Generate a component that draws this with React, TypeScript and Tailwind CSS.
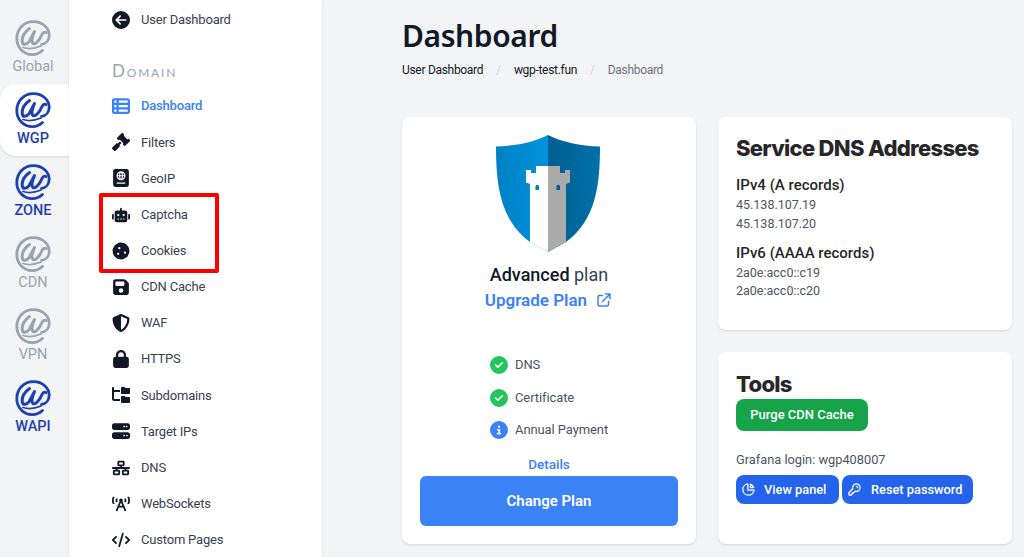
import React from "react";
import {
  FaCircleArrowLeft, FaTableList, FaGavel, FaPassport, FaRobot, FaCookie, FaFloppyDisk,
  FaShieldHalved, FaLock, FaFolderTree, FaServer, FaNetworkWired, FaCode, FaCircleCheck, FaCircleInfo,
} from "react-icons/fa6";
import { FaBroadcastTower } from "react-icons/fa";
import { HiOutlineChartPie, HiOutlineKey, HiOutlineExternalLink } from "react-icons/hi";

function Logo({ color }: { color: string }) {
  return (
    <svg width="36" height="36" viewBox="0 0 36 36" fill="none" stroke={color} strokeLinecap="round" strokeLinejoin="round">
      <path d="M27.500 30.500C24.500 33.400 21 34.600 17.500 34.600C8.500 34.600 1.800 27.500 1.800 18.400C1.800 9 9 1.600 18.400 1.600C27.500 1.600 34.200 8 34.200 15.200C34.200 20.200 31 23.800 26.500 24.400" strokeWidth="2.800" />
      <path d="M14.500 8.500C9.500 12 6.800 17 7.200 21.500C7.600 25.500 11.800 25 14.200 21.500L19.500 11.500C17.500 16.500 16 21.500 17.800 23.300C20 25.300 24.500 20.500 26.500 15.500C27.500 13 29 11.500 31 12.500" strokeWidth="3" />
      <path d="M8 27.500C14 29.500 20 28.500 26 26" strokeWidth="1.800" />
    </svg>
  );
}

function RailItem({ label, active, blue }: { label: string; active?: boolean; blue?: boolean }) {
  return (
    <div className={`h-[72px] pr-[3px] flex flex-col items-center justify-center ${active ? "bg-white rounded-l-2xl shadow-sm" : ""}`}>
      <Logo color={blue ? "#1e40af" : "#9ca3af"} />
      <div className={`text-[14.500px] leading-[18px] mt-[2px] ${blue ? "text-[#1e40af] font-medium" : "text-[#9ca3af]"}`}>{label}</div>
    </div>
  );
}

function NavItem({ icon, label, active }: { icon: React.ReactNode; label: string; active?: boolean }) {
  return (
    <div className={`h-[36.150px] flex items-center text-[13px] tracking-[-0.2px] ${active ? "text-[#3b82f6] font-medium" : "text-[#374151]"}`}>
      <span className={`w-[29px] flex items-center text-[18px] ${active ? "text-[#3b82f6]" : "text-[#111827]"}`}>{icon}</span>
      <span>{label}</span>
    </div>
  );
}

function Shield() {
  return (
    <svg width="104" height="118" viewBox="0 0 104 118" className="-ml-[2px]">
      <defs>
        <linearGradient id="sl" x1="0" y1="0" x2="1" y2="0">
          <stop offset="0" stopColor="#0080c4" />
          <stop offset="1" stopColor="#0093dd" />
        </linearGradient>
        <linearGradient id="sr" x1="0" y1="0" x2="1" y2="0">
          <stop offset="0" stopColor="#005f92" />
          <stop offset="1" stopColor="#0071a8" />
        </linearGradient>
      </defs>
      <path d="M52 0C38 7 20 11 0 11.500C0 50 4 85 34 107L52 117Z" fill="url(#sl)" />
      <path d="M52 0C66 7 84 11 104 11.500C104 50 100 85 70 107L52 117Z" fill="url(#sr)" />
      <path d="M52 31H40V38H35V35H30V47.500L34 49V107L52 117Z" fill="#fff" />
      <path d="M52 31H64V38H69V35H74V47.500L70 49V107L52 117Z" fill="#aaaaaa" />
      <path d="M39.500 55V51.500A1.700 1.700 0 0 1 43 51.500V55Z" fill="#0080c4" />
      <path d="M60.500 55V51.500A1.700 1.700 0 0 1 64 51.500V55Z" fill="#005f92" />
    </svg>
  );
}

function Feature({ icon, label }: { icon: React.ReactNode; label: string }) {
  return (
    <div className="flex items-center gap-[7px] h-[18px] text-[13px] tracking-[-0.1px] text-[#4b5563]">
      <span className="text-[18px]">{icon}</span>
      <span>{label}</span>
    </div>
  );
}

export default function App() {
  return (
    <div className="h-[557px] w-[1024px] overflow-hidden flex relative bg-[#f3f4f6] font-['Roboto',sans-serif]">
      <aside className="w-[69px] shrink-0 pt-3 bg-[#f3f4f6]">
        <RailItem label="Global" />
        <RailItem label="WGP" active blue />
        <RailItem label="ZONE" blue />
        <RailItem label="CDN" />
        <RailItem label="VPN" />
        <RailItem label="WAPI" blue />
      </aside>

      <nav className="w-[253px] shrink-0 bg-white shadow-sm pl-[43px] pt-[2px]">
        <NavItem icon={<FaCircleArrowLeft />} label="User Dashboard" />
        <div className="mt-[23px] mb-[8px] h-[19px] leading-[19px] text-[17px] text-[#9ca3af] tracking-[1.800px] [font-variant:small-caps] font-['Lato',sans-serif]">Domain</div>
        <NavItem icon={<FaTableList />} label="Dashboard" active />
        <NavItem icon={<FaGavel />} label="Filters" />
        <NavItem icon={<FaPassport />} label="GeoIP" />
        <NavItem icon={<FaRobot />} label="Captcha" />
        <NavItem icon={<FaCookie />} label="Cookies" />
        <NavItem icon={<FaFloppyDisk />} label="CDN Cache" />
        <NavItem icon={<FaShieldHalved />} label="WAF" />
        <NavItem icon={<FaLock />} label="HTTPS" />
        <NavItem icon={<FaFolderTree />} label="Subdomains" />
        <NavItem icon={<FaServer />} label="Target IPs" />
        <NavItem icon={<FaNetworkWired />} label="DNS" />
        <NavItem icon={<FaBroadcastTower />} label="WebSockets" />
        <NavItem icon={<FaCode />} label="Custom Pages" />
      </nav>

      <main className="flex-1 pl-[80px] pr-3 pt-[16px]">
        <h1 className="text-[30px] leading-[40px] font-semibold tracking-[-0.4px] text-[#111827] font-['Noto_Sans',sans-serif]">Dashboard</h1>
        <div className="mt-[3px] flex items-center text-[12px] leading-[22px] tracking-[-0.3px] text-[#111827]">
          <span>User Dashboard</span>
          <span className="mx-[13px] text-[#d1d5db]">/</span>
          <span>wgp-test.fun</span>
          <span className="mx-[13px] text-[#d1d5db]">/</span>
          <span className="text-[#6b7280]">Dashboard</span>
        </div>

        <div className="mt-[36px] grid grid-cols-[294px_294px] gap-x-[22px]">
          <section className="h-[427px] rounded-lg bg-white shadow-sm pt-[18px] px-[18px] flex flex-col items-center">
            <Shield />
            <div className="mt-[11px] text-[18px] leading-[22px] text-[#374151]">
              <span className="font-medium text-[#111827]">Advanced</span> plan
            </div>
            <div className="mt-[3px] flex items-center gap-[8px] text-[17px] leading-[22px] font-semibold text-[#3b82f6]">
              Upgrade Plan <HiOutlineExternalLink className="text-[18px]" />
            </div>
            <div className="mt-[45px] w-full pl-[70px] flex flex-col gap-[14.500px]">
              <Feature icon={<FaCircleCheck className="text-[#22c55e]" />} label="DNS" />
              <Feature icon={<FaCircleCheck className="text-[#22c55e]" />} label="Certificate" />
              <Feature icon={<FaCircleInfo className="text-[#3b82f6]" />} label="Annual Payment" />
            </div>
            <div className="mt-[16px] text-[13.500px] leading-[18px] font-medium text-[#3b82f6]">Details</div>
            <button className="mt-[3px] w-[258px] h-[50px] rounded-md bg-[#3b82f6] text-white text-[15px] font-semibold">Change Plan</button>
          </section>

          <div className="flex flex-col gap-[22px]">
            <section className="h-[213px] rounded-lg bg-white shadow-sm pt-[16px] px-[18px]">
              <h2 className="text-[22px] leading-[30px] font-extrabold text-[#27272a] font-['Inter',sans-serif] tracking-[-0.7px]">Service DNS Addresses</h2>
              <div className="mt-[12px] text-[15px] leading-[20px] font-medium text-[#27272a]">IPv4 (A records)</div>
              <div className="mt-[1px] text-[12.500px] leading-[18.500px] text-[#4b5563]">45.138.107.19<br />45.138.107.20</div>
              <div className="mt-[10px] text-[15px] leading-[20px] font-medium text-[#27272a]">IPv6 (AAAA records)</div>
              <div className="mt-[1px] text-[12.500px] leading-[18px] text-[#4b5563]">2a0e:acc0::c19<br />2a0e:acc0::c20</div>
            </section>

            <section className="h-[192px] rounded-lg bg-white shadow-sm pt-[17px] px-[18px]">
              <h2 className="text-[22px] leading-[30px] font-extrabold text-[#27272a] font-['Inter',sans-serif] tracking-[-0.7px]">Tools</h2>
              <button className="w-[132px] h-[32px] rounded-lg bg-[#16a34a] text-white text-[13px] font-medium">Purge CDN Cache</button>
              <div className="mt-[20px] text-[12.800px] leading-[18px] text-[#4b5563]">Grafana login: wgp408007</div>
              <div className="mt-[6px] flex gap-[3px]">
                <button className="w-[103px] h-[29px] rounded-lg bg-[#2563eb] text-white text-[12.800px] font-medium flex items-center pl-[5px] gap-[8px]">
                  <HiOutlineChartPie className="text-[15px]" /> View panel
                </button>
                <button className="w-[131px] h-[29px] rounded-lg bg-[#2563eb] text-white text-[12.800px] font-medium flex items-center pl-[5px] gap-[9px]">
                  <HiOutlineKey className="text-[15px]" /> Reset password
                </button>
              </div>
            </section>
          </div>
        </div>
      </main>

      <div className="absolute left-[99px] top-[193px] w-[120px] h-[80px] border-4 border-[#ff0000] rounded-[2px]" />
    </div>
  );
}
